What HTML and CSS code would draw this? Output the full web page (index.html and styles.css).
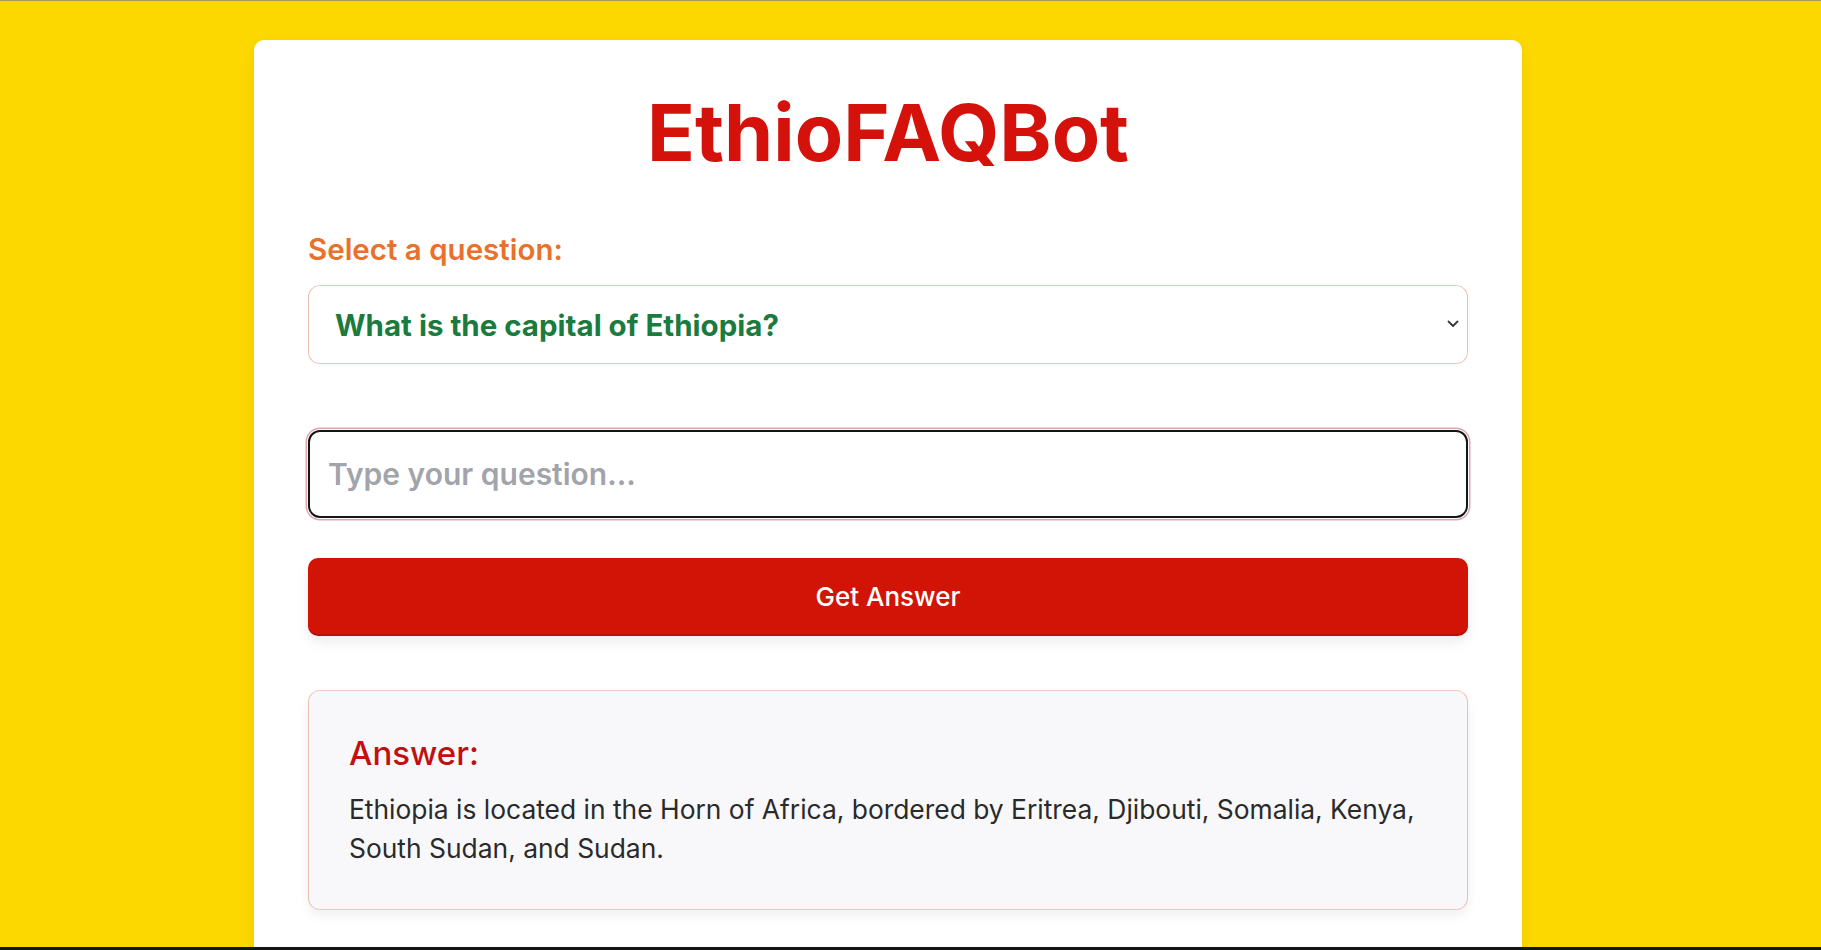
FILE: index.html
```html
<!DOCTYPE html>
<html lang="en">
<head>
<meta charset="utf-8">
<title>EthioFAQBot</title>
<link rel="stylesheet" href="styles.css">
</head>
<body>
<div class="screen">
  <main class="card">
    <h1 class="title">EthioFAQBot</h1>
    <label class="label" for="q-select">Select a question:</label>
    <div class="select-wrap">
      <select id="q-select" class="select">
        <option>What is the capital of Ethiopia?</option>
      </select>
      <svg class="chevron" width="12" height="8" viewBox="0 0 12 8" aria-hidden="true">
        <path d="M1.5 1.5 L6 6 L10.5 1.5" fill="none" stroke="#3a3a3a" stroke-width="1.8" stroke-linecap="round" stroke-linejoin="round"/>
      </svg>
    </div>
    <input class="input" type="text" placeholder="Type your question...">
    <button class="btn" type="button">Get Answer</button>
    <section class="answer">
      <h2 class="answer-title">Answer:</h2>
      <p class="answer-text">Ethiopia is located in the Horn of Africa, bordered by Eritrea, Djibouti, Somalia, Kenya, South Sudan, and Sudan.</p>
    </section>
  </main>
</div>
</body>
</html>
```
FILE: styles.css
```css
* { box-sizing: border-box; }

html, body {
  margin: 0;
  padding: 0;
  height: 100%;
}

body {
  background: #fdd800;
  font-family: Inter, "Noto Sans", "Liberation Sans", sans-serif;
}

.screen {
  height: 950px;
  overflow: hidden;
  border-top: 1px solid #a09a5c;
  border-bottom: 3px solid #141414;
  padding: 39px 0 0 254px;
  display: flex;
  align-items: flex-start;
}

.card {
  width: 1268px;
  min-height: 1000px;
  background: #ffffff;
  border-radius: 10px;
  box-shadow: 0 4px 18px rgba(0, 0, 0, 0.06);
  padding: 45px 54px;
  display: flex;
  flex-direction: column;
}

.title {
  margin: 0 0 50px;
  font-size: 79px;
  line-height: 95px;
  font-weight: 700;
  color: #d5110c;
  text-align: center;
}

.label {
  display: block;
  font-size: 29.5px;
  line-height: 39px;
  font-weight: 600;
  color: #e8712c;
  margin-bottom: 16px;
}

.select-wrap {
  position: relative;
  margin-bottom: 66px;
}

.select {
  appearance: none;
  -webkit-appearance: none;
  width: 100%;
  height: 79px;
  border: 1px solid #efc4c0;
  border-left-color: #ebbfae;
  border-right-color: #ebbfae;
  border-radius: 12px;
  background: #ffffff;
  padding: 0 50px 0 26px;
  font-family: inherit;
  font-size: 29.5px;
  font-weight: 700;
  color: #1b7a3d;
  outline: none;
}

.chevron {
  position: absolute;
  right: 9px;
  top: 35px;
}

.input {
  width: 100%;
  height: 88px;
  border: 2px solid #151515;
  border-radius: 12px;
  box-shadow: 0 0 0 1px #ffffff, 0 0 0 2.5px #dfa3ad;
  padding: 0 18px;
  font-family: inherit;
  font-size: 30px;
  font-weight: 600;
  color: #222;
  margin-bottom: 40px;
  outline: none;
}

.input::placeholder {
  color: #a2a4ab;
}

.btn {
  width: 100%;
  height: 76px;
  border: none;
  border-radius: 10px;
  background: #d11405;
  color: #ffffff;
  font-family: inherit;
  font-size: 26px;
  font-weight: 500;
  box-shadow: 0 2px 0 #b90f04, 0 8px 14px rgba(0, 0, 0, 0.08);
  margin-bottom: 56px;
}

.answer {
  background: #f8f8fa;
  border: 1px solid #f0c8c5;
  border-left-color: #ecc0b0;
  border-right-color: #ecc0b0;
  border-radius: 12px;
  box-shadow: 0 6px 12px rgba(0, 0, 0, 0.06);
  padding: 42px 40px 42px;
}

.answer-title {
  margin: 0 0 17px;
  font-size: 33px;
  line-height: 40px;
  font-weight: 500;
  color: #c1100f;
}

.answer-text {
  margin: 0;
  font-size: 26.4px;
  line-height: 38.5px;
  font-weight: 400;
  color: #2a2a2a;
}
```
